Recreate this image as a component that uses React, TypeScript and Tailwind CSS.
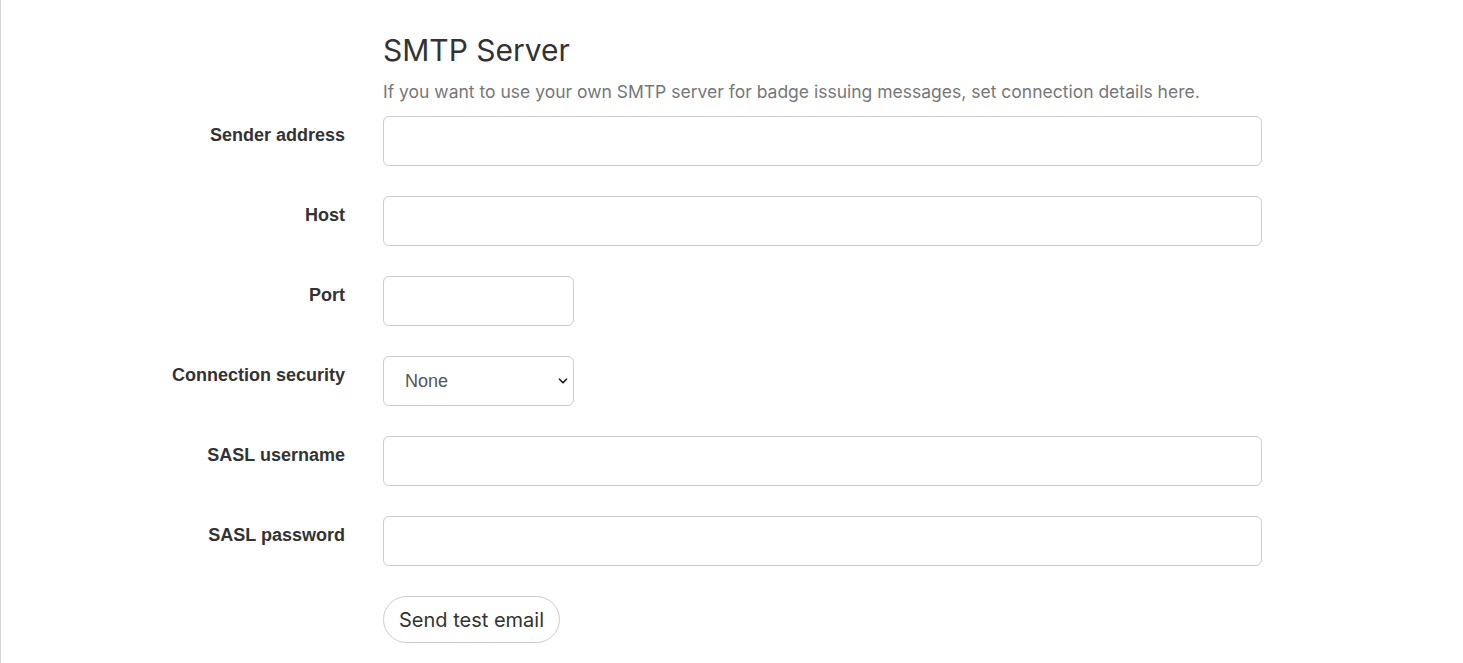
import { ChevronDown } from 'lucide-react';

const fields = [
  { label: 'Sender address', kind: 'wide' },
  { label: 'Host', kind: 'wide' },
  { label: 'Port', kind: 'short' },
  { label: 'Connection security', kind: 'select' },
  { label: 'SASL username', kind: 'wide' },
  { label: 'SASL password', kind: 'wide' },
];

export default function App() {
  return (
    <div className="min-h-[663px] border-l border-[#d4d4d4] bg-white font-['Inter',sans-serif]">
      <div className="grid grid-cols-[344px_879px] gap-x-[38px] pt-[30px]">
        <div />
        <div className="pb-[12px]">
          <h2 className="text-[30px] leading-[40px] font-normal text-[#333]">SMTP Server</h2>
          <p className="mt-[10px] text-[17.5px] leading-[24px] text-[#777]">
            If you want to use your own SMTP server for badge issuing messages, set connection details here.
          </p>
        </div>

        {fields.map((f, i) => (
          <div key={i} className="contents">
            <label
              className={`pt-[7px] text-right font-['Liberation_Sans',Arial,sans-serif] text-[18px] leading-[24px] font-bold text-[#333] ${i === 0 ? '' : 'mt-[30px]'}`}
            >
              {f.label}
            </label>
            <div className={i === 0 ? '' : 'mt-[30px]'}>
              {f.kind === 'select' ? (
                <div className="relative flex h-[50px] w-[191px] items-center rounded-[6px] border border-[#ccc] px-[21px] font-['Liberation_Sans',Arial,sans-serif] text-[18px] text-[#555]">
                  None
                  <ChevronDown className="absolute right-[3px] h-[14px] w-[14px] text-[#222]" strokeWidth={3} />
                </div>
              ) : (
                <input
                  type="text"
                  className={`h-[50px] rounded-[6px] border border-[#ccc] bg-white px-3 outline-none ${f.kind === 'short' ? 'w-[191px]' : 'w-[879px]'}`}
                />
              )}
            </div>
          </div>
        ))}

        <div />
        <div className="mt-[30px]">
          <button className="h-[47px] rounded-full border border-[#ccc] bg-white px-[15px] text-[20px] text-[#333]">
            Send test email
          </button>
        </div>
      </div>
    </div>
  );
}
